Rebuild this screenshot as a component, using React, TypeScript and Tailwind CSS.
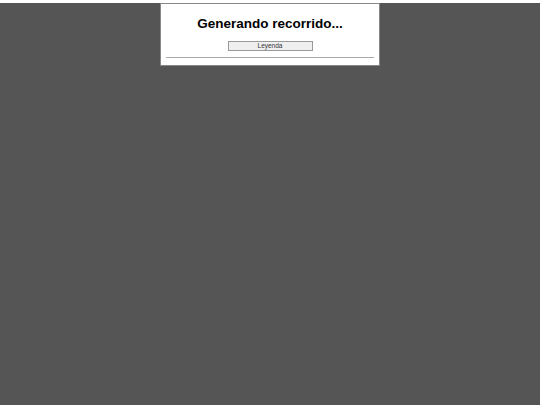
export default function App() {
  return (
    <div className="min-h-[405px] w-full bg-[#555555] font-['Liberation_Sans',Arial,sans-serif]">
      <div className="mx-auto mt-[3px] w-[220px] border border-[#888] bg-white px-[5px] pb-[7px] pt-[12px]">
        <h1 className="text-center text-[13.5px] font-bold leading-[16px] text-black">
          Generando recorrido...
        </h1>
        <div className="mt-[9px] flex justify-center">
          <button className="flex h-[10px] w-[85px] items-center justify-center border border-[#999] bg-[#efefef] text-[6.5px] leading-none text-[#333]">
            Leyenda
          </button>
        </div>
        <hr className="mt-[6px] border-t border-[#aaa]" />
      </div>
    </div>
  );
}
